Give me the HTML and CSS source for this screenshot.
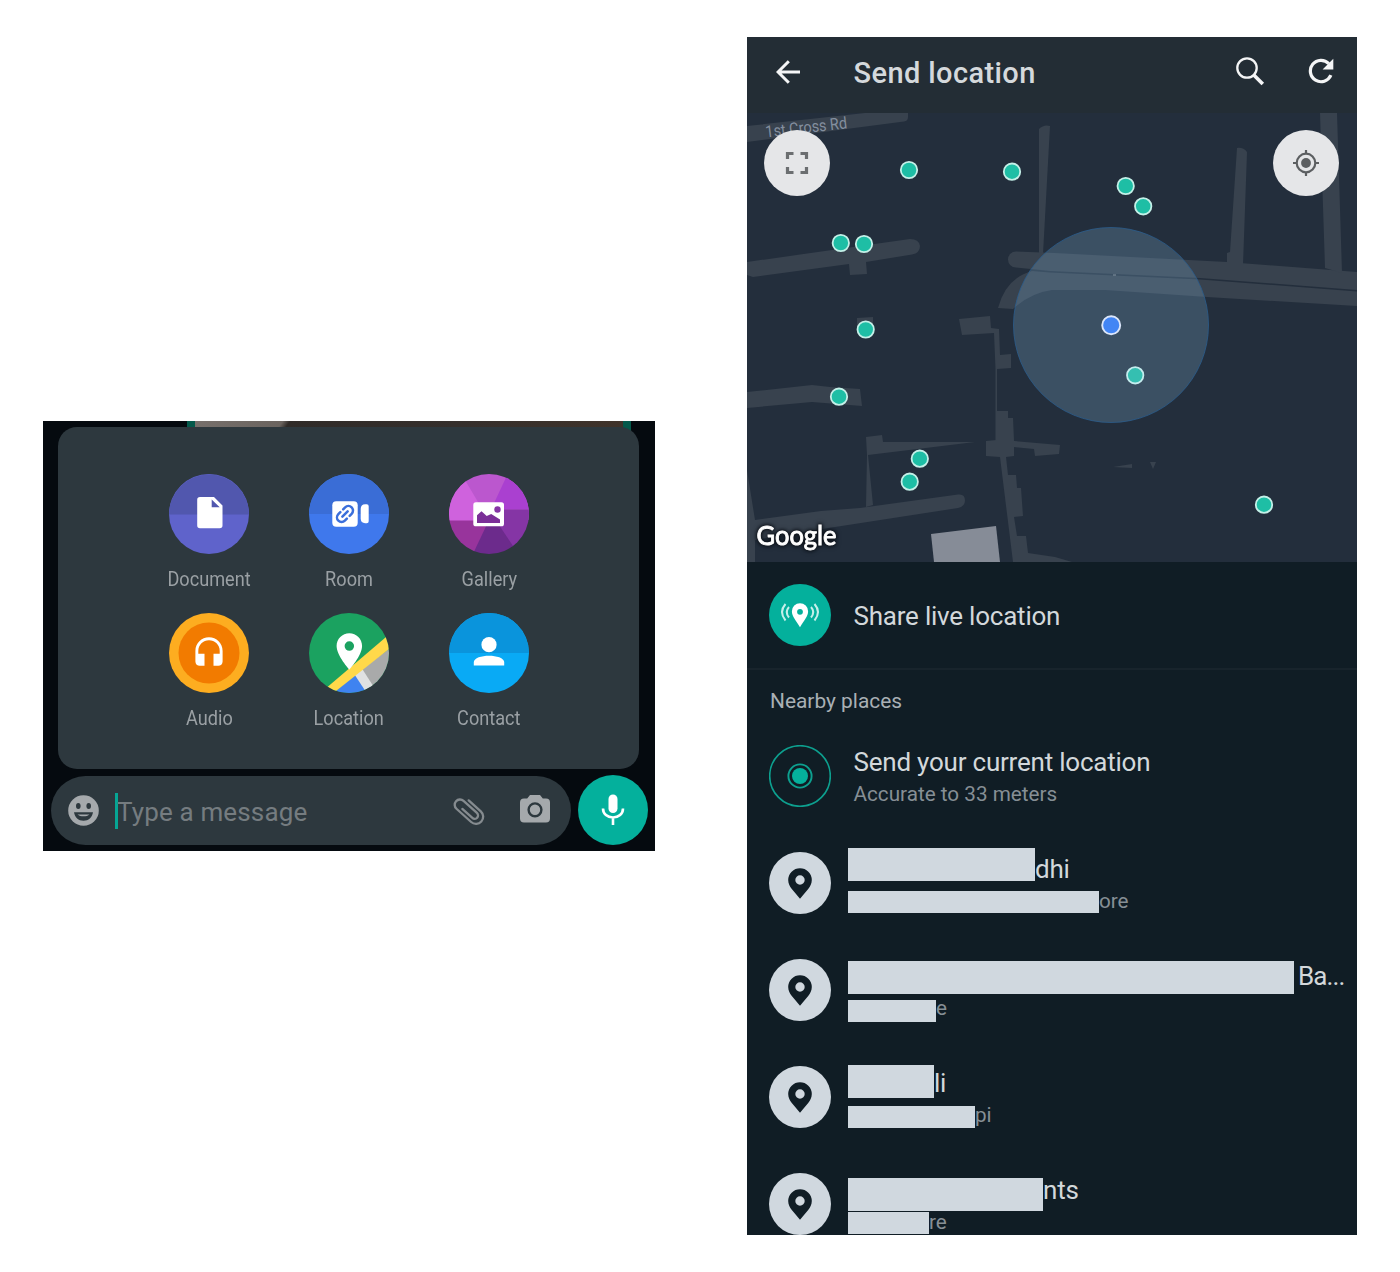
FILE: index.html
```html
<!DOCTYPE html>
<html lang="en">
<head>
<meta charset="utf-8">
<title>Send location</title>
<link rel="stylesheet" href="styles.css">
</head>
<body>
<svg width="0" height="0" class="defs">
  <defs>
    <symbol id="place" viewBox="0 0 62 62">
      <circle cx="31" cy="31" r="31" fill="#d0d8df"/>
      <path fill="#101d25" fill-rule="evenodd" d="M31 16.200A11.800 11.800 0 0 0 19.200 28c0 3.600 1.500 6.200 3.600 8.900L31 46.700l8.200-9.800c2.100-2.700 3.600-5.300 3.600-8.900A11.800 11.800 0 0 0 31 16.200zM31 23.300a4.700 4.700 0 1 1 0 9.400 4.700 4.700 0 0 1 0-9.400z"/>
    </symbol>
  </defs>
</svg>
<main class="page">
  <section class="chat">
    <div class="photo"></div>
    <div class="sheet">
      <div class="option">
        <svg width="80" height="80" viewBox="0 0 80 80"><circle cx="40" cy="40" r="40" fill="#5f63cb"/><path d="M0 40.500a40 40 0 0 1 80 0z" fill="#5157ae"/><path fill="#fff" fill-rule="evenodd" d="M31 23h14l8.500 8.500V51.500a2.800 2.800 0 0 1-2.800 2.800H31a2.800 2.800 0 0 1-2.800-2.800V25.800A2.800 2.800 0 0 1 31 23zM42.700 25.500v7.800h8z"/></svg>
        <span>Document</span>
      </div>
      <div class="option">
        <svg width="80" height="80" viewBox="0 0 80 80"><circle cx="40" cy="40" r="40" fill="#3f78ec"/><path d="M0 40a40 40 0 0 1 80 0z" fill="#3a6dd6"/><rect x="23.300" y="27.300" width="25.400" height="25.400" rx="4" fill="#fff"/><path d="M51.700 35q0-4.500 4.500-4.700h1.500q2 0 2 2v15q0 2-2 2h-1.500q-4.500-.2-4.500-4.700z" fill="#fff"/><g transform="translate(36 40) rotate(-45)" fill="none" stroke="#3b6fdb" stroke-width="2.500" stroke-linecap="round"><path d="M-2 -4.600h-2.800a4.600 4.600 0 0 0 0 9.200h2.800M2 -4.600h2.800a4.600 4.600 0 0 1 0 9.200h-2.800M-3.700 0h7.400"/></g></svg>
        <span>Room</span>
      </div>
      <div class="option">
        <svg width="80" height="80" viewBox="0 0 80 80"><clipPath id="c1"><circle cx="40" cy="40" r="40"/></clipPath><g clip-path="url(#c1)"><path fill="#bb57ce" d="M-4-4h88v50H-4z"/><path fill="#aa40d0" d="M40 40L60.500-4H84v39.500H40z"/><path fill="#8535a5" d="M40 35.500h44V84H72L40 40z"/><path fill="#6c2b8c" d="M40 36l32 48H22z"/><path fill="#98349c" d="M40 46H-4v38h26z"/><path fill="#cf62dd" d="M-4-4h14l30 50.500H-4z"/></g><rect x="24.300" y="28.300" width="30.700" height="24" rx="2.600" fill="#fff"/><path fill="#7b2f98" d="M28 49v-7.700l4.500-4 5.200 4.700 4.500-2 8.800 5.500V49z"/><circle cx="48.500" cy="35.500" r="3.200" fill="#8535a5"/></svg>
        <span>Gallery</span>
      </div>
      <div class="option">
        <svg width="80" height="80" viewBox="0 0 80 80"><circle cx="40" cy="40" r="40" fill="#fdad20"/><circle cx="40" cy="40" r="30.500" fill="#f27b00"/><path fill="#fff" d="M40 24.300c-7.500 0-13.600 6-13.600 13.600v10.500c0 2.500 1.900 4.400 4.400 4.400h4.700V40.700h-6.200v-2.800a10.700 10.700 0 0 1 21.400 0v2.800h-6.200v12.100h4.700c2.500 0 4.400-1.900 4.400-4.400V37.900c0-7.600-6.100-13.600-13.600-13.600z"/></svg>
        <span>Audio</span>
      </div>
      <div class="option">
        <svg width="80" height="80" viewBox="0 0 80 80"><clipPath id="c2"><circle cx="40" cy="40" r="40"/></clipPath><g clip-path="url(#c2)"><path fill="#1ba260" d="M0 0h80v80H0z"/><path fill="#a9aaaa" d="M84 33v51H60L50 58z"/><path fill="#3f83f0" d="M25 80l22-20 12 22z"/><path fill="#e0e1e2" d="M44.500 60l7.500-6 16 25-9 3z"/><path fill="#ffd94a" d="M12 79.500L84 18v14.800L22 82z"/></g><path fill="#fff" fill-rule="evenodd" transform="translate(18.500 16.700) scale(1.820)" d="M12 2C8.130 2 5 5.130 5 9c0 5.250 7 13 7 13s7-7.750 7-13c0-3.870-3.130-7-7-7zm0 4.400a2.600 2.600 0 1 1 0 5.200 2.600 2.600 0 0 1 0-5.200z"/></svg>
        <span>Location</span>
      </div>
      <div class="option">
        <svg width="80" height="80" viewBox="0 0 80 80"><circle cx="40" cy="40" r="40" fill="#09aaf5"/><path d="M0 40a40 40 0 0 1 80 0z" fill="#0a94dc"/><circle cx="40" cy="31.700" r="7.600" fill="#fff"/><path fill="#fff" d="M24.800 52.600v-3.500c0-4.200 8-6.400 15.200-6.400s15.200 2.200 15.200 6.400v3.500z"/></svg>
        <span>Contact</span>
      </div>
    </div>
    <div class="composer">
      <div class="field">
        <svg class="smile" width="31" height="31" viewBox="0 0 31 31"><circle cx="15.500" cy="15.500" r="15.300" fill="#a5a9ac"/><g fill="#2d383e"><ellipse cx="10.300" cy="11" rx="2.300" ry="2.900"/><ellipse cx="20.700" cy="11" rx="2.300" ry="2.900"/><path fill-rule="evenodd" d="M6 17.200h19c-.8 5-4.500 8.500-9.500 8.500S6.800 22.200 6 17.200zm3.500 2.200c1.500 1.300 3.500 1.900 6 1.900s4.500-.6 6-1.900z"/></g></svg>
        <i class="caret"></i>
        <span class="hint">Type a message</span>
        <svg class="clip" width="34" height="32" viewBox="0 0 34 32"><g transform="translate(17 15.500) rotate(42)" fill="none" stroke="#858b8f" stroke-width="2.300" stroke-linecap="round"><path d="M-7 -7.300H9.300a7.200 7.200 0 0 1 0 14.400H-10.500a5.300 5.300 0 0 1 0-10.600H7.500a3.400 3.400 0 0 1 0 6.800H-6"/></g></svg>
        <svg class="camera" width="30" height="28" viewBox="0 0 30 28"><path fill="#a5a9ac" d="M10 0h10l2.800 3.600H26a4 4 0 0 1 4 4V23.500a4 4 0 0 1-4 4H4a4 4 0 0 1-4-4V7.600a4 4 0 0 1 4-4h3.200z"/><circle cx="15" cy="14.800" r="6.400" fill="none" stroke="#2d383e" stroke-width="2.400"/></svg>
      </div>
      <div class="mic"><svg width="24" height="32" viewBox="0 0 24 32"><rect x="7.500" y="0.500" width="9" height="18.500" rx="4.500" fill="#fff"/><path d="M2 14.500c0 5.500 4.500 9 10 9s10-3.500 10-9M12 23.500V31" fill="none" stroke="#fff" stroke-width="2.600"/></svg></div>
    </div>
  </section>

  <section class="phone">
    <header class="bar">
      <svg class="back" width="24" height="24" viewBox="0 0 24 24"><path d="M24 12H2M12.800 1.200L2 12l10.800 10.800" fill="none" stroke="#f4f5f6" stroke-width="3"/></svg>
      <h1>Send location</h1>
      <svg class="search" width="29" height="29" viewBox="0 0 29 29"><g fill="none" stroke="#f4f5f6"><circle cx="11" cy="11" r="9.700" stroke-width="2.300"/><path d="M17.800 18l9 9" stroke-width="3.600"/></g></svg>
      <svg class="refresh" width="26" height="26" viewBox="0 0 26 26"><path d="M22.900 17.200A10.700 10.700 0 1 1 20.800 5.600" fill="none" stroke="#f4f5f6" stroke-width="3.200"/><path fill="#f4f5f6" d="M25.300 0.800v10.700H14.600z"/></svg>
    </header>
    <div class="map">
      <svg width="610" height="449" viewBox="747 113 610 449">
        <g fill="#38424e">
          <path d="M747 126l118-13h43v4q0 4-4 4.500L747 142z"/>
          <path d="M747 262l163-23q9 0 10 7 0 7-8 8.500L866 262l1 12-17 1-1-11-96 13-6-2z"/>
          <path d="M1039 129q5-5 11-3l-7 128h-4z"/>
          <path d="M1016 251.500l39 1.500 172 9 130 10v18l-157-12-150-7-34-3.500a8 8 0 0 1 0-16z"/>
          <path d="M1050 272.500l150 7 157 12V306l-150-9-102-7h-53q-22 3-39 19l-15-1q8-30 34-37z"/>
          <path d="M1237 148q6-1 10 4l-4 113h-16v-12l3-1zM1320 113h17l5 160-17-5z"/>
          <path d="M857 318l16-1v13h-16zM959 319l31-3 1 12 8 1 1 26 11-1v14l-14 1v72h-1.500v-72l-1.500-36-32 2z"/>
          <path d="M997 411h11v7h5l1 23 46 4-1 9-24 2-1-7-20-2v9l-8 1 2 18h8l1 13h4l2 28-9 1 3 19h9l2 17 27 4 17 5h-59l-13-105-14-1v-15l11-1z"/>
          <path d="M747 392l65-7 18 2 30 2 2 17-50-4-65 6zM866 437l16-2 1 7h92l-107 13 5 50-7 2 1-52z"/>
          <path d="M747 470l8 50 66-9 39-3 98-13.500q7-1 7 6 0 6-7 7.500L835 527l-80 13v22h-8z"/>
          <path d="M1113 467l19-3v4zM1150 462h6l-3 7z"/>
        </g>
        <path fill="#868c97" d="M931 534l65-8 4 36h-66z"/>
        <text x="766" y="137.500" transform="rotate(-6.500 766 137)" textLength="82" lengthAdjust="spacingAndGlyphs" class="road">1st Cross Rd</text>
        <g class="dots">
          <circle cx="909" cy="170" r="8.200"/><circle cx="1012" cy="171.700" r="8.200"/><circle cx="1125.700" cy="186" r="8.200"/><circle cx="1143.200" cy="206.300" r="8.200"/><circle cx="840.800" cy="243" r="8.200"/><circle cx="864" cy="244" r="8.200"/><circle cx="865.700" cy="329.500" r="8.200"/><circle cx="839" cy="396.700" r="8.200"/><circle cx="919.800" cy="458.700" r="8.200"/><circle cx="909.700" cy="481.700" r="8.200"/><circle cx="1264" cy="504.700" r="8.200"/>
        </g>
        <circle cx="1111" cy="325" r="97.500" fill="#739fc1" fill-opacity=".3" stroke="#2a5c8c" stroke-opacity=".8"/>
        <circle cx="1135.200" cy="375.300" r="8.200" fill="#35bfb1" stroke="#c4ecee" stroke-width="1.800"/>
        <circle cx="1111.200" cy="325.200" r="9" fill="#4285f4" stroke="#dbe6fa" stroke-width="1.900"/>
        <path d="M1113 275h3" stroke="#8393a0"/>
        <text x="756.500" y="545" textLength="80" lengthAdjust="spacingAndGlyphs" class="google">Google</text>
      </svg>
      <div class="round full"><svg width="24" height="24" viewBox="0 0 24 24"><path d="M2.500 8V2.500h6M15.500 2.500h6V8M21.500 16v5.500h-6M8.500 21.500h-6V16" fill="none" stroke="#6b6e70" stroke-width="3.200"/></svg></div>
      <div class="round gps"><svg width="26" height="26" viewBox="0 0 26 26"><circle cx="13" cy="13" r="9.300" fill="none" stroke="#5c5f61" stroke-width="2.200"/><circle cx="13" cy="13" r="4.900" fill="#5c5f61"/><path d="M13 0v4M13 22v4M0 13h4M22 13h4" stroke="#5c5f61" stroke-width="2.200"/></svg></div>
    </div>
    <div class="row live">
      <svg width="62" height="62" viewBox="0 0 62 62"><circle cx="31" cy="31" r="31" fill="#04b09c"/><path fill="#fff" fill-rule="evenodd" d="M31 19.200a8.100 8.100 0 0 0-8.100 8.100c0 5.200 4 9 8.100 16 4.100-7 8.100-10.800 8.100-16a8.100 8.100 0 0 0-8.100-8.100zm0 5.700a2.900 2.900 0 1 1 0 5.800 2.900 2.900 0 0 1 0-5.800z"/><g fill="none" stroke="#c6efea" stroke-width="2"><path d="M20 23q-4.500 5 0 10.500M16.500 20q-7 8 0 16.500M42 23q4.500 5 0 10.500M45.500 20q7 8 0 16.500"/></g></svg>
      <div class="lines"><div class="title">Share live location</div></div>
    </div>
    <h2>Nearby places</h2>
    <div class="row">
      <svg width="62" height="62" viewBox="0 0 62 62"><g fill="none" stroke="#0da08f"><circle cx="31" cy="31" r="30.300" stroke-width="1.600"/><circle cx="31" cy="31" r="11.600" stroke-width="1.900"/></g><circle cx="31" cy="31" r="8" fill="#05b19c"/></svg>
      <div class="lines"><div class="title current">Send your current location</div><div class="sub accuracy">Accurate to 33 meters</div></div>
    </div>
    <div class="row r1">
      <svg width="62" height="62"><use href="#place"/></svg>
      <div class="lines"><div class="title"><i style="width:187px"></i>dhi</div><div class="sub"><i style="width:251px"></i>ore</div></div>
    </div>
    <div class="row r2">
      <svg width="62" height="62"><use href="#place"/></svg>
      <div class="lines"><div class="title"><i style="width:446px"></i><span class="gap">Ba...</span></div><div class="sub"><i style="width:88px"></i>e</div></div>
    </div>
    <div class="row r3">
      <svg width="62" height="62"><use href="#place"/></svg>
      <div class="lines"><div class="title"><i style="width:86px"></i>li</div><div class="sub"><i style="width:127px"></i>pi</div></div>
    </div>
    <div class="row r4">
      <svg width="62" height="62"><use href="#place"/></svg>
      <div class="lines"><div class="title"><i style="width:195px"></i>nts</div><div class="sub"><i style="width:81px"></i>re</div></div>
    </div>
  </section>
</main>
</body>
</html>
```
FILE: styles.css
```css
* { box-sizing: border-box; }
body { margin: 0; background: #fff; font-family: Roboto, "Liberation Sans", sans-serif; }
svg { display: block; flex: none; }
.defs { position: absolute; }
.page { display: flex; justify-content: space-between; align-items: flex-start; height: 1272px; padding: 37px 43px; }

.chat { width: 612px; height: 430px; margin-top: 384px; background: #050a0f; overflow: hidden; }
.photo { height: 18px; width: 444px; margin: 0 0 -12px 144px; border: solid #04594b; border-width: 0 8px; background: linear-gradient(125deg, #77706c 0, #6b645f 72px, #302b28 78px, #352f2c 60%, #40332a); }
.sheet { position: relative; width: 581px; height: 342px; margin-left: 15px; padding: 46.500px 80px 0 80.500px; border-radius: 19px; background: #2d383e; display: grid; grid-template-columns: repeat(3, 140px); grid-auto-rows: 139.500px; }
.option { display: flex; flex-direction: column; align-items: center; }
.option span { margin: 12px 0 0 1px; font-size: 20.500px; line-height: 26px; color: #9aa0a4; transform: scaleX(.885); white-space: nowrap; }
.composer { display: flex; margin: 7px 0 0 8px; gap: 7px; }
.field { display: flex; align-items: center; width: 520px; height: 69px; padding: 0 21px 0 16.500px; border-radius: 35px; background: #2d383e; }
.caret { width: 3px; height: 36px; margin-left: 16.500px; background: #06a594; }
.hint { margin: 2px 0 0 -1px; flex: 1; font-size: 26px; letter-spacing: .15px; color: #757c80; }
.clip { margin-left: -2px; margin-right: 2px; }
.camera { margin-left: 32px; margin-bottom: 3px; }
.mic { display: flex; align-items: center; justify-content: center; width: 70px; height: 70px; margin-top: -1px; border-radius: 50%; background: #04b09c; }

.phone { width: 610px; height: 1198px; background: #101d25; overflow: hidden; }
.bar { display: flex; align-items: center; height: 76px; padding: 0 23px 7px 29px; background: #232d35; }
h1 { flex: 1; margin: 2px 0 0 53.500px; font-size: 29px; letter-spacing: .4px; font-weight: 500; color: #d5d9dc; }
.search { margin-bottom: 1px; }
.refresh { margin-left: 43px; margin-bottom: 2px; }
.map { position: relative; height: 449px; background: #232e3c; }
.dots { fill: #1ebea5; stroke: #c4f0e8; stroke-width: 1.800px; }
.road { font-size: 16.500px; fill: #848f9f; }
.google { font: 400 26.500px Lato, sans-serif; fill: #fff; stroke: #fff; stroke-width: .900px; filter: drop-shadow(0 0 1.500px #0b1017) drop-shadow(0 0 2px #0b1017); }
.round { position: absolute; top: 17px; display: flex; align-items: center; justify-content: center; width: 66px; height: 66px; border-radius: 50%; background: #e5e6e8; }
.full { left: 17px; }
.gps { right: 18px; }
.row { display: flex; height: 107px; padding: 21.500px 0 0 21.500px; }
.lines { margin: 3.500px 0 0 17.500px; }
.title, .sub { display: flex; white-space: nowrap; }
.title { height: 30px; line-height: 29px; font-size: 26px; letter-spacing: -.22px; color: #d3d8db; }
.sub { margin-top: 5px; height: 24px; line-height: 22px; font-size: 20.700px; color: #868f95; }
.live { height: 108px; border-bottom: 2px solid #18242c; }
.live .title, .current, .accuracy { margin-left: 5.500px; }
.live .lines { margin-top: 18px; }
h2 { height: 53px; margin: 0; padding: 18px 0 0 23px; font-size: 20.900px; line-height: 26px; font-weight: 400; color: #a9b0b5; }
.title i { height: 33px; background: #d0d8df; }
.sub i { height: 22px; background: #d0d8df; }
.gap { margin-left: 4px; letter-spacing: -.9px; }
.r1 .title i { margin-top: -7px; }
.r2 .title i { margin-top: -1px; }
.r3 .title i { margin-top: -4px; }
.r4 .title i { margin-top: 2px; }
.r1 .sub i, .r4 .sub i { margin-top: 1px; }
.r2 .sub i { margin-top: 3px; }
.r3 .sub i { margin-top: 2px; }
```
